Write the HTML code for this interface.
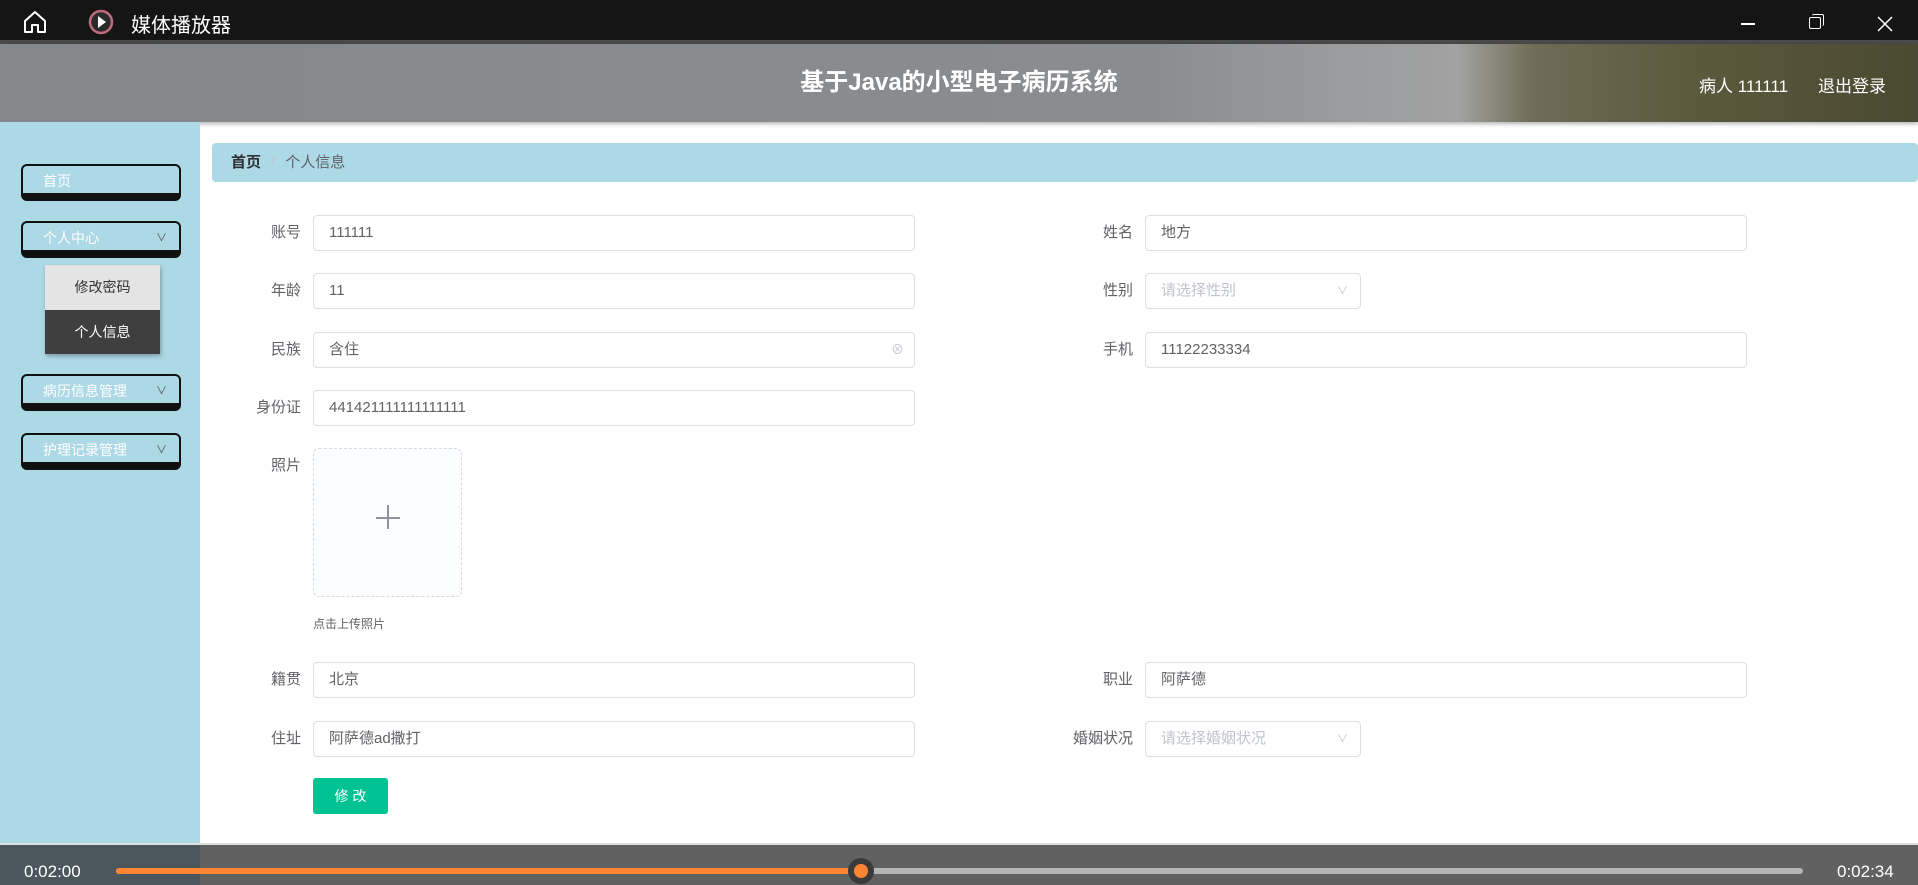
<!DOCTYPE html>
<html><head><meta charset="utf-8"><style>
*{margin:0;padding:0;box-sizing:border-box}
body{width:1918px;height:885px;overflow:hidden;background:#fff;font-family:"Liberation Sans","Noto Sans CJK SC",sans-serif;position:relative}
.abs{position:absolute}
.tb{left:0;top:0;width:1918px;height:40px;background:#151515}
.tb2{left:0;top:40px;width:1918px;height:4px;background:#4a4a4a}
.hdr{left:0;top:44px;width:1918px;height:78px;background:linear-gradient(90deg,#85888b 0%,#8a8d90 60%,#9a9c9e 70%,#a2a2a2 76%,#6e6c55 80%,#5b5a3e 88%,#4a4a32 100%);box-shadow:0 2px 4px rgba(0,0,0,.3)}
.side{left:0;top:122px;width:200px;height:723px;background:#add8e6}
.btn{position:absolute;left:21px;width:160px;height:37px;background:#add8e6;border:2px solid #111;border-radius:6px;border-bottom:8px solid #111;color:#fff;font-size:14px;line-height:25px;padding:3px 0 0 20px}
.btn .ch{position:absolute;right:12px;top:3px;font-size:11px;color:#555}
.lbl{position:absolute;font-size:15px;color:#606266;text-align:right;width:120px;line-height:36px}
.inp{position:absolute;height:36px;border:1px solid #dcdfe6;border-radius:4px;font-size:15px;color:#606266;padding:0 0 0 15px;line-height:34px;background:#fff}
.ph{color:#c0c4cc}
</style></head><body>
<div class="abs tb"></div>
<svg class="abs" style="left:22px;top:10px" width="26" height="24" viewBox="0 0 26 24"><path d="M3 11 L13 2 L23 11 V22 H16 V15 H10 V22 H3 Z" fill="none" stroke="#fff" stroke-width="2" stroke-linejoin="round"/></svg>
<svg class="abs" style="left:88px;top:9px" width="26" height="26" viewBox="0 0 26 26"><circle cx="13" cy="13" r="11" fill="#2a2a2a" stroke="#c06a80" stroke-width="2.5"/><path d="M10 7 L18 13 L10 19Z" fill="#fff"/></svg>
<div class="abs" style="left:131px;top:9px;color:#fff;font-size:20px">媒体播放器</div>
<div class="abs" style="left:1741px;top:23px;width:14px;height:1.5px;background:#fff"></div>
<div class="abs" style="left:1809px;top:17px;width:12px;height:12px;border:1.5px solid #fff;border-radius:2px"></div>
<div class="abs" style="left:1812px;top:14px;width:12px;height:12px;border-top:1.5px solid #fff;border-right:1.5px solid #fff;border-radius:2px"></div>
<svg class="abs" style="left:1877px;top:16px" width="16" height="16"><path d="M1 1L15 15M15 1L1 15" stroke="#fff" stroke-width="1.5"/></svg>
<div class="abs tb2"></div>
<div class="abs hdr"></div>
<div class="abs" style="left:0;top:44px;width:1918px;height:78px;text-align:center;color:#fff;font-size:24px;font-weight:bold;line-height:78px">基于Java的小型电子病历系统</div>
<div class="abs" style="left:1699px;top:72px;color:#fff;font-size:17px">病人 111111</div>
<div class="abs" style="left:1818px;top:72px;color:#fff;font-size:17px">退出登录</div>
<div class="abs side"></div>
<div class="btn" style="top:164px">首页</div>
<div class="btn" style="top:221px">个人中心<span class="ch">∨</span></div>
<div class="abs" style="left:45px;top:265px;width:115px;height:89px;box-shadow:1px 2px 4px rgba(0,0,0,.3)">
<div style="height:45px;background:#e4e4e4;color:#333;font-size:14px;text-align:center;line-height:45px">修改密码</div>
<div style="height:44px;background:#3f3f3f;color:#fff;font-size:14px;text-align:center;line-height:44px">个人信息</div></div>
<div class="btn" style="top:374px">病历信息管理<span class="ch">∨</span></div>
<div class="btn" style="top:433px">护理记录管理<span class="ch">∨</span></div>
<div class="abs" style="left:212px;top:143px;width:1706px;height:39px;background:#add8e6;border-radius:4px;font-size:15px;line-height:39px;padding-left:19px"><b style="color:#303133">首页</b><span style="color:#c0c4cc;margin:0 10px">/</span><span style="color:#606266">个人信息</span></div>

<div class="lbl" style="left:181px;top:215px">账号</div><div class="inp" style="left:313px;top:215px;width:602px">111111</div>
<div class="lbl" style="left:1013px;top:215px">姓名</div><div class="inp" style="left:1145px;top:215px;width:602px">地方</div>
<div class="lbl" style="left:181px;top:273px">年龄</div><div class="inp" style="left:313px;top:273px;width:602px">11</div>
<div class="lbl" style="left:1013px;top:273px">性别</div><div class="inp" style="left:1145px;top:273px;width:216px"><span class="ph">请选择性别</span><span style="position:absolute;right:12px;top:0;font-size:11px;color:#c0c4cc">∨</span></div>
<div class="lbl" style="left:181px;top:332px">民族</div><div class="inp" style="left:313px;top:332px;width:602px">含住<span style="position:absolute;right:10px;top:0;font-size:13px;color:#c0c4cc">⊗</span></div>
<div class="lbl" style="left:1013px;top:332px">手机</div><div class="inp" style="left:1145px;top:332px;width:602px">11122233334</div>
<div class="lbl" style="left:181px;top:390px">身份证</div><div class="inp" style="left:313px;top:390px;width:602px">441421111111111111</div>
<div class="lbl" style="left:181px;top:448px">照片</div>
<div class="abs" style="left:313px;top:448px;width:149px;height:149px;border:1px dashed #d9d9d9;border-radius:6px;background:#fbfdff"></div>
<div class="abs" style="left:376px;top:517px;width:24px;height:1.5px;background:#8c939d"></div>
<div class="abs" style="left:387px;top:505px;width:1.5px;height:24px;background:#8c939d"></div>
<div class="abs" style="left:313px;top:615px;font-size:12px;color:#606266">点击上传照片</div>
<div class="lbl" style="left:181px;top:662px">籍贯</div><div class="inp" style="left:313px;top:662px;width:602px">北京</div>
<div class="lbl" style="left:1013px;top:662px">职业</div><div class="inp" style="left:1145px;top:662px;width:602px">阿萨德</div>
<div class="lbl" style="left:181px;top:721px">住址</div><div class="inp" style="left:313px;top:721px;width:602px">阿萨德ad撒打</div>
<div class="lbl" style="left:1013px;top:721px">婚姻状况</div><div class="inp" style="left:1145px;top:721px;width:216px"><span class="ph">请选择婚姻状况</span><span style="position:absolute;right:12px;top:0;font-size:11px;color:#c0c4cc">∨</span></div>
<div class="abs" style="left:313px;top:778px;width:75px;height:36px;background:#00c292;border-radius:3px;color:#fff;font-size:14px;text-align:center;line-height:36px">修 改</div>

<div class="abs" style="left:0;top:843px;width:1918px;height:3px;background:#e0e0e0"></div>
<div class="abs" style="left:0;top:845px;width:1918px;height:40px;background:#616161"></div>
<div class="abs" style="left:0;top:845px;width:200px;height:40px;background:#4b575d"></div>
<div class="abs" style="left:24px;top:862px;color:#fff;font-size:17px">0:02:00</div>
<div class="abs" style="left:116px;top:868px;width:1687px;height:6px;background:#b5b5b5;border-radius:3px"></div>
<div class="abs" style="left:116px;top:868px;width:745px;height:6px;background:#ff8533;border-radius:3px"></div>
<div class="abs" style="left:848px;top:858px;width:26px;height:26px;border-radius:50%;background:#3a3a3a"></div>
<div class="abs" style="left:854px;top:864px;width:14px;height:14px;border-radius:50%;background:#ff8533"></div>
<div class="abs" style="left:1837px;top:862px;color:#fff;font-size:17px">0:02:34</div>
</body></html>
